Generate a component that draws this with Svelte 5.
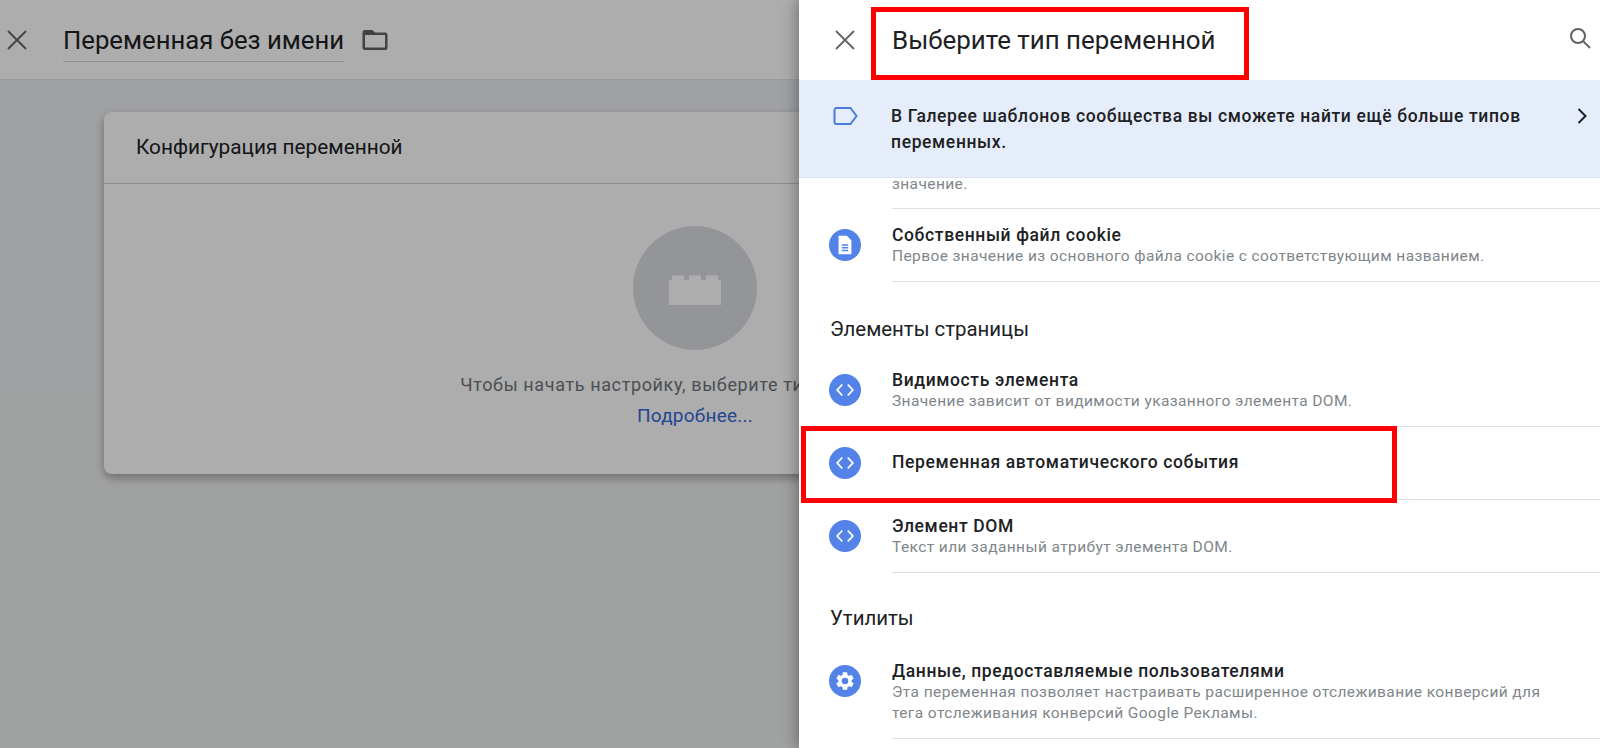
<script>
  const gear = "M19.14 12.94c.04-.3.06-.61.06-.94s-.02-.64-.07-.94l2.03-1.58a.49.49 0 0 0 .12-.61l-1.92-3.32a.49.49 0 0 0-.59-.22l-2.39.96c-.5-.38-1.03-.7-1.62-.94l-.36-2.54a.48.48 0 0 0-.48-.41h-3.84a.48.48 0 0 0-.47.41l-.36 2.54c-.59.24-1.13.57-1.62.94l-2.39-.96a.48.48 0 0 0-.59.22L2.74 8.87a.48.48 0 0 0 .12.61l2.03 1.58c-.05.3-.09.63-.09.94s.02.64.07.94l-2.03 1.58a.49.49 0 0 0-.12.61l1.92 3.32c.12.22.37.29.59.22l2.39-.96c.5.38 1.03.7 1.62.94l.36 2.54c.05.24.24.41.48.41h3.84c.24 0 .44-.17.47-.41l.36-2.54c.59-.24 1.13-.56 1.62-.94l2.39.96c.22.08.47 0 .59-.22l1.92-3.32a.48.48 0 0 0-.12-.61l-2.01-1.58zM12 15.6A3.6 3.6 0 1 1 12 8.4a3.6 3.6 0 0 1 0 7.2z";
  const pageItems = [
    { title: "Видимость элемента", desc: "Значение зависит от видимости указанного элемента DOM." },
    { title: "Переменная автоматического события", desc: "" },
    { title: "Элемент DOM", desc: "Текст или заданный атрибут элемента DOM." }
  ];
</script>

<div class="page">
  <header class="top">
    <svg class="close" viewBox="0 0 24 24"><path d="M3 3l18 18M21 3L3 21" /></svg>
    <span class="name">Переменная без имени</span>
    <svg class="folder" viewBox="0 0 24 24"><path d="M10 4H4a2 2 0 0 0-2 2v12a2 2 0 0 0 2 2h16a2 2 0 0 0 2-2V8a2 2 0 0 0-2-2h-8l-2-2zm10 14H4V8h16v10z" /></svg>
  </header>

  <main class="content">
    <section class="card">
      <h2>Конфигурация переменной</h2>
      <div class="empty">
        <div class="disc">
          <svg viewBox="0 0 54 32"><path d="M1 7h3V3.500q0-1 1-1h10q1 0 1 1V7h5V3.500q0-1 1-1h10q1 0 1 1V7h5V3.500q0-1 1-1h10q1 0 1 1V7h3v25H1z" /></svg>
        </div>
        <p>Чтобы начать настройку, выберите тип переменной</p>
        <a href="#more">Подробнее...</a>
      </div>
    </section>
  </main>

  <div class="scrim"></div>

  <aside class="panel">
    <header class="phead">
      <svg class="pclose" viewBox="0 0 24 24"><path d="M3 3l18 18M21 3L3 21" /></svg>
      <h1>Выберите тип переменной</h1>
      <svg class="search" viewBox="0 0 24 24"><circle cx="10" cy="10" r="7" /><path d="M15 15l7 7" /></svg>
    </header>

    <div class="banner">
      <svg class="tag" viewBox="0 0 26 20"><path d="M3.500 2h14l6 8-6 8h-14a2 2 0 0 1-2-2V4a2 2 0 0 1 2-2z" /></svg>
      <p>В Галерее шаблонов сообщества вы сможете найти ещё больше типов переменных.</p>
      <svg class="chev" viewBox="0 0 12 20"><path d="M2.500 3l7 7-7 7" /></svg>
    </div>

    <div class="list">
      <div class="cut">значение.</div>
      <div class="row">
        <span class="ico">
          <svg viewBox="0 0 24 24"><path d="M5 2h9l5 5v15H5z" fill="#fff" /><path d="M8.500 12h7M8.500 15h7M8.500 18h7" stroke="#5383e8" stroke-width="1.500" fill="none" /></svg>
        </span>
        <div class="txt">
          <div class="t">Собственный файл cookie</div>
          <div class="d">Первое значение из основного файла cookie с соответствующим названием.</div>
        </div>
      </div>

      <h3>Элементы страницы</h3>
      {#each pageItems as it}
        <div class="row" class:only={!it.desc}>
          <span class="ico">
            <svg viewBox="0 0 24 24"><path d="M9 6l-5.500 6L9 18M15 6l5.500 6L15 18" fill="none" stroke="#fff" stroke-width="2" /></svg>
          </span>
          <div class="txt">
            <div class="t">{it.title}</div>
            {#if it.desc}<div class="d">{it.desc}</div>{/if}
          </div>
        </div>
      {/each}

      <h3 class="tight">Утилиты</h3>
      <div class="row">
        <span class="ico">
          <svg viewBox="0 0 24 24"><path d={gear} fill="#fff" /></svg>
        </span>
        <div class="txt">
          <div class="t">Данные, предоставляемые пользователями</div>
          <div class="d">Эта переменная позволяет настраивать расширенное отслеживание конверсий для тега отслеживания конверсий Google Рекламы.</div>
        </div>
      </div>
    </div>
  </aside>

  <div class="mark m1"></div>
  <div class="mark m2"></div>
</div>

<style>
  :global(body) { margin: 0; background: #fff; }
  .page {
    position: relative; width: 1600px; height: 748px; overflow: hidden;
    font-family: Roboto, "Noto Sans", sans-serif; color: #202124;
    background: linear-gradient(#eceef0, #ecedee);
  }
  .top {
    height: 80px; box-sizing: border-box; background: #fff; border-bottom: 1px solid #e3e3e3;
    display: flex; align-items: center; padding-left: 5px;
  }
  .close { width: 24px; height: 24px; margin-right: 34px; }
  .close path { stroke: #5f6368; stroke-width: 1.8; fill: none; }
  .name {
    font-size: 25.7px; line-height: 41px; color: #202124; border-bottom: 1px solid #d6d6d6;
    margin-top: 2px; font-weight: 400; white-space: nowrap;
  }
  .folder { width: 30px; height: 30px; margin-left: 16px; fill: #5f6368; }
  .content { padding: 32px 0 0 104px; }
  .card {
    width: 1200px; height: 362px; background: #fff; border-radius: 8px;
    box-shadow: 0 4px 10px rgba(0,0,0,.32);
  }
  .card h2 {
    margin: 0; height: 72px; box-sizing: border-box; padding: 0 32px; font-size: 20.8px; font-weight: 400;
    line-height: 70px; border-bottom: 1px solid #d0d0d0; color: #202124;
  }
  .empty { display: flex; flex-direction: column; align-items: center; padding-top: 42px; width: 1182px; }
  .disc {
    width: 124px; height: 124px; border-radius: 50%; background: #dadce0;
    display: flex; align-items: center; justify-content: center;
  }
  .disc svg { width: 54px; height: 32px; fill: #fff; margin-top: 2px; }
  .empty p { margin: 23px 0 0; font-size: 18px; line-height: 24px; color: #70757a; letter-spacing: .62px; white-space: nowrap; }
  .empty a { margin-top: 7px; font-size: 19px; line-height: 24px; color: #3367d6; text-decoration: none; letter-spacing: .25px; }
  .scrim { position: absolute; inset: 0; background: rgba(0,0,0,.32); }
  .panel {
    position: absolute; top: 0; right: 0; bottom: 0; width: 801px; background: #fff;
    box-shadow: -2px 0 14px rgba(0,0,0,.35); display: flex; flex-direction: column;
  }
  .phead { height: 80px; flex: none; display: flex; align-items: center; }
  .pclose { width: 24px; height: 24px; margin-left: 34px; margin-right: 35px; }
  .pclose path { stroke: #5f6368; stroke-width: 1.8; fill: none; }
  .phead h1 { margin: 0; font-size: 25.9px; font-weight: 400; flex: 1; color: #202124; }
  .search { width: 24px; height: 24px; margin-right: 8px; margin-top: -4px; fill: none; stroke: #5f6368; stroke-width: 2; }
  .banner {
    height: 98px; box-sizing: border-box; flex: none; background: #e6edfa; display: flex; align-items: flex-start;
    padding: 23px 12px 0 34px; border-bottom: 1px solid #dfe3ea; position: relative; z-index: 1;
  }
  .tag { width: 26px; height: 20px; flex: none; margin-top: 3px; margin-right: 32px; fill: none; stroke: #4a7be0; stroke-width: 2; }
  .banner p { margin: 0; width: 665px; font-size: 17.500px; line-height: 26px; font-weight: 500; letter-spacing: .63px; color: #202124; }
  .chev { width: 12px; height: 20px; margin-left: auto; margin-top: 3px; fill: none; stroke: #202124; stroke-width: 2; }
  .list { flex: 1; overflow: hidden; }
  .cut {
    margin: -2px 0 0 93px; padding-bottom: 15px; line-height: 17px; font-size: 15.5px; color: #80868b;
    letter-spacing: .4px; border-bottom: 1px solid #e0e0e0;
  }
  .row { display: flex; min-height: 73px; }
  .ico {
    width: 32px; height: 32px; border-radius: 50%; background: #5383e8; flex: none; margin: 20px 31px 0 30px;
    display: flex; align-items: center; justify-content: center;
  }
  .ico svg { width: 22px; height: 22px; }
  .txt { flex: 1; border-bottom: 1px solid #e0e0e0; padding-top: 15px; box-sizing: border-box; min-width: 0; }
  .only .txt { display: flex; align-items: center; padding: 0 0 2px; }
  .t { font-size: 17.5px; line-height: 22px; font-weight: 500; letter-spacing: .62px; color: #202124; }
  .d { font-size: 15.5px; line-height: 21px; color: #80868b; letter-spacing: .4px; width: 660px; padding-bottom: 14px; }
  h3 {
    margin: 0; font-size: 20.4px; font-weight: 400; color: #202124; padding: 35px 0 0 31px; height: 72px;
    line-height: 24px; box-sizing: border-box;
  }
  h3.tight { padding-top: 33px; }
  .mark { position: absolute; border: 5px solid #f00; box-sizing: border-box; pointer-events: none; }
  .m1 { left: 871px; top: 7px; width: 378px; height: 73px; }
  .m2 { left: 801px; top: 426px; width: 596px; height: 77px; }
</style>
